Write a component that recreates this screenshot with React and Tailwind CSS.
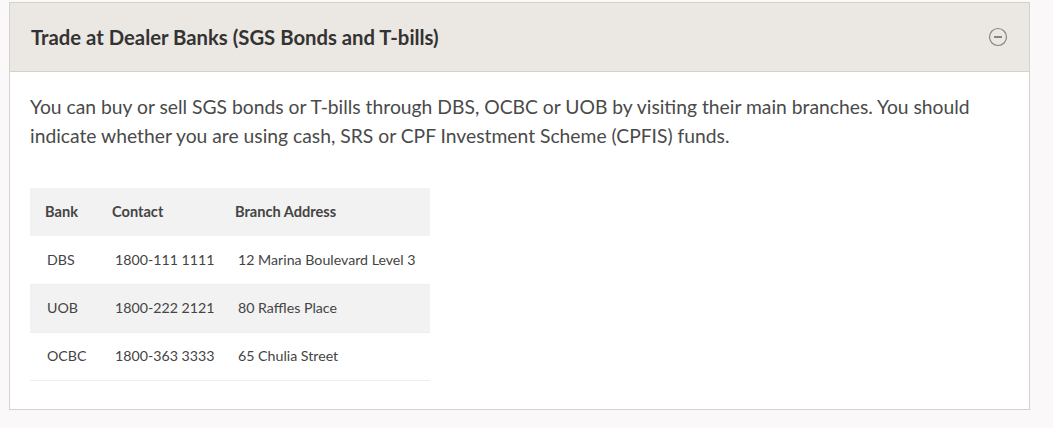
import React from 'react';

const rows = [
  { bank: 'DBS', contact: '1800-111 1111', address: '12 Marina Boulevard Level 3' },
  { bank: 'UOB', contact: '1800-222 2121', address: '80 Raffles Place' },
  { bank: 'OCBC', contact: '1800-363 3333', address: '65 Chulia Street' },
];

const MinusCircle = () => (
  <svg width="20" height="20" viewBox="0 0 20 20" fill="none">
    <circle cx="10" cy="10" r="8.5" stroke="#8a8580" strokeWidth="1.2" />
    <line x1="6" y1="10" x2="14" y2="10" stroke="#6f6a66" strokeWidth="1.6" />
  </svg>
);

export default function App() {
  return (
    <div className="min-h-[428px] bg-[#faf8f8] pt-[2px] pl-[9px] pr-[23px] font-['Lato',sans-serif]">
      <div className="border border-[#d6d1ca] bg-white">
        {/* Header */}
        <div className="flex items-center justify-between h-[69px] pl-[21px] pr-[21px] bg-[#ebe7e2] border-b border-[#d6d1ca]">
          <h2 className="text-[20.3px] font-bold text-[#333]">Trade at Dealer Banks (SGS Bonds and T-bills)</h2>
          <MinusCircle />
        </div>

        {/* Body */}
        <div className="pt-[20px] pb-[28px] pl-[20px] pr-[20px]">
          <p className="text-[19.3px] leading-[29px] text-[#4a4a4a] max-w-[975px]">
            You can buy or sell SGS bonds or T-bills through DBS, OCBC or UOB by visiting their main branches. You should indicate whether you are using cash, SRS or CPF Investment Scheme (CPFIS) funds.
          </p>

          <table className="mt-[38px] w-[400px] text-[14.2px] text-[#444]">
            <thead>
              <tr className="bg-[#f2f2f2] h-[48px] text-[14.6px]">
                <th className="text-left font-bold pl-[15px] w-[67px]">Bank</th>
                <th className="text-left font-bold pl-[15px] w-[123px]">Contact</th>
                <th className="text-left font-bold pl-[15px]">Branch Address</th>
              </tr>
            </thead>
            <tbody>
              {rows.map((r, i) => (
                <tr key={r.bank} className={`h-[48px] border-b border-[#eeeeee] ${i === 1 ? 'bg-[#f2f2f2]' : 'bg-white'}`}>
                  <td className="pl-[17px]">{r.bank}</td>
                  <td className="pl-[18px]">{r.contact}</td>
                  <td className="pl-[18px]">{r.address}</td>
                </tr>
              ))}
            </tbody>
          </table>
        </div>
      </div>
    </div>
  );
}
